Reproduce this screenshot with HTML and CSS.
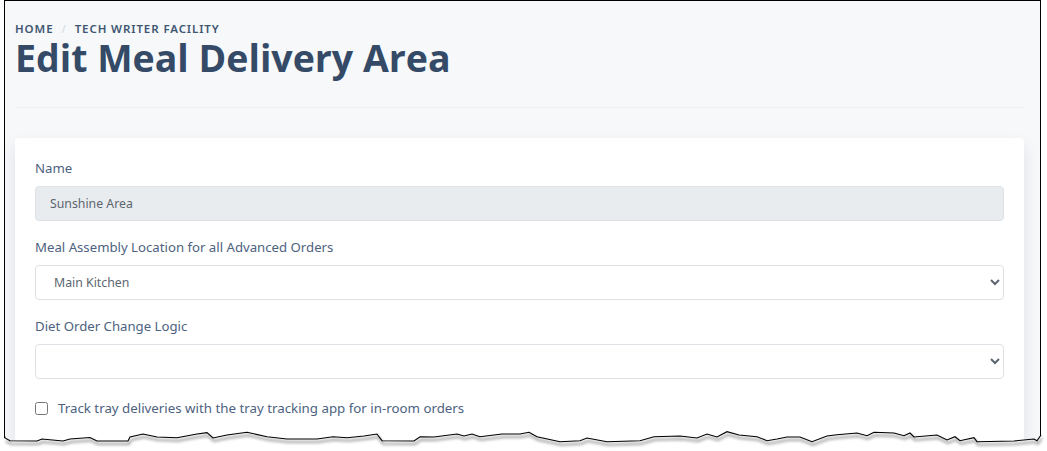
FILE: index.html
```html
<!DOCTYPE html>
<html lang="en">
<head>
    <meta charset="UTF-8">
    <meta name="viewport" content="width=device-width, initial-scale=1.0">
    <title>Edit Meal Delivery Area</title>
    <link rel="stylesheet" href="styles.css">
</head>
<body>
    <div class="frame">
        <div class="page-head">
            <ol class="breadcrumb">
                <li>Home</li>
                <li class="sep">/</li>
                <li>Tech Writer Facility</li>
            </ol>
            <h1>Edit Meal Delivery Area</h1>
        </div>
        <hr class="divider">

        <form class="card">
            <div class="field">
                <label for="name">Name</label>
                <input type="text" id="name" class="input-field" value="Sunshine Area" disabled>
            </div>
            <div class="field">
                <label for="location">Meal Assembly Location for all Advanced Orders</label>
                <select id="location" class="input-field select-field">
                    <option>Main Kitchen</option>
                </select>
            </div>
            <div class="field">
                <label for="logic">Diet Order Change Logic</label>
                <select id="logic" class="input-field select-field">
                    <option></option>
                </select>
            </div>
            <div class="check-row">
                <input type="checkbox" id="tracking">
                <label for="tracking">Track tray deliveries with the tray tracking app for in-room orders</label>
            </div>
        </form>
    </div>

    <!-- Torn bottom edge of the screenshot -->
    <svg class="torn-edge" width="1047" height="451" viewBox="0 0 1047 451">
        <defs>
            <filter id="edgeShadow" x="-2%" y="-50%" width="104%" height="220%">
                <feGaussianBlur stdDeviation="1.6"/>
            </filter>
        </defs>
        <path class="edge-fill" d="M0 451 L0 438 L5 438 L10 440.7 L37 441 L42 439 L63 441 L70 439 L90 437.5 L97 441 L128 441 L130 437 L143 434 L157 437 L177 437.7 L197 434 L207 432.7 L213 438 L227 435 L247 432.3 L267 436.7 L287 439 L317 439 L333 436.7 L347 437.7 L364 436 L377 434 L382 440.7 L414 441 L420 436.7 L434 437 L457 434 L464 436 L472 434 L480 436.7 L502 434 L520 434 L529 432.3 L537 436.7 L560 441.7 L580 440.7 L587 438 L607 441.7 L640 440.7 L654 436.7 L680 436 L697 438 L707 434 L717 437 L727 431.7 L739 435 L757 436.7 L767 440.7 L777 439 L787 437 L800 437 L812 441.7 L827 436 L837 434.7 L857 433 L867 435.7 L874 432.3 L894 433 L904 435.7 L910 433 L914 437 L937 435 L947 440 L955 436.7 L960 440.7 L974 437.7 L977 441.7 L1014 441 L1034 439 L1037 440.7 L1041 435 L1047 435 L1047 451 Z" />
        <path class="edge-shadow" filter="url(#edgeShadow)" transform="translate(1 3)" d="M5 438 L10 440.7 L37 441 L42 439 L63 441 L70 439 L90 437.5 L97 441 L128 441 L130 437 L143 434 L157 437 L177 437.7 L197 434 L207 432.7 L213 438 L227 435 L247 432.3 L267 436.7 L287 439 L317 439 L333 436.7 L347 437.7 L364 436 L377 434 L382 440.7 L414 441 L420 436.7 L434 437 L457 434 L464 436 L472 434 L480 436.7 L502 434 L520 434 L529 432.3 L537 436.7 L560 441.7 L580 440.7 L587 438 L607 441.7 L640 440.7 L654 436.7 L680 436 L697 438 L707 434 L717 437 L727 431.7 L739 435 L757 436.7 L767 440.7 L777 439 L787 437 L800 437 L812 441.7 L827 436 L837 434.7 L857 433 L867 435.7 L874 432.3 L894 433 L904 435.7 L910 433 L914 437 L937 435 L947 440 L955 436.7 L960 440.7 L974 437.7 L977 441.7 L1014 441 L1034 439 L1037 440.7 L1041 435"/>
        <path class="edge-line" d="M4.5 436 L5 438 L10 440.7 L37 441 L42 439 L63 441 L70 439 L90 437.5 L97 441 L128 441 L130 437 L143 434 L157 437 L177 437.7 L197 434 L207 432.7 L213 438 L227 435 L247 432.3 L267 436.7 L287 439 L317 439 L333 436.7 L347 437.7 L364 436 L377 434 L382 440.7 L414 441 L420 436.7 L434 437 L457 434 L464 436 L472 434 L480 436.7 L502 434 L520 434 L529 432.3 L537 436.7 L560 441.7 L580 440.7 L587 438 L607 441.7 L640 440.7 L654 436.7 L680 436 L697 438 L707 434 L717 437 L727 431.7 L739 435 L757 436.7 L767 440.7 L777 439 L787 437 L800 437 L812 441.7 L827 436 L837 434.7 L857 433 L867 435.7 L874 432.3 L894 433 L904 435.7 L910 433 L914 437 L937 435 L947 440 L955 436.7 L960 440.7 L974 437.7 L977 441.7 L1014 441 L1034 439 L1037 440.7 L1041 435"/>
    </svg>
</body>
</html>
```

FILE: styles.css
```css
/* General reset */
* {
    margin: 0;
    padding: 0;
    box-sizing: border-box;
}

body {
    font-family: 'Noto Sans', 'Open Sans', sans-serif;
    background-color: #ffffff;
    color: #4d6280;
    height: 451px;
    overflow: hidden;
    position: relative;
}

.frame {
    margin-left: 4px;
    width: 1037px;
    height: 445px;
    padding: 0 16px 0 10px;
    background-color: #f6f8fa;
    border: 1px solid #000000;
    border-bottom: none;
    overflow: hidden;
}

.page-head {
    padding-top: 20px;
    height: 106px;
}

.breadcrumb {
    list-style: none;
    display: flex;
    gap: 8px;
    font-size: 11.5px;
    line-height: 16px;
    font-weight: 600;
    letter-spacing: 0.9px;
    text-transform: uppercase;
    color: #3f5672;
}

.sep {
    color: #d5dade;
    font-weight: 400;
}

h1 {
    font-family: 'Open Sans', 'Noto Sans', sans-serif;
    font-size: 37.5px;
    line-height: 42px;
    font-weight: 700;
    color: #344a66;
}

.divider {
    border: none;
    border-top: 1px solid #edf0f2;
}

.card {
    margin-top: 30px;
    padding: 20px;
    height: 320px;
    background-color: #ffffff;
    border-radius: 4px;
    box-shadow: 0 8px 16px rgba(30, 40, 60, 0.11);
}

.field {
    margin-bottom: 16px;
}

.field label {
    display: block;
    font-size: 13.2px;
    line-height: 20px;
    margin-bottom: 8px;
}

.input-field {
    display: block;
    width: 100%;
    height: 35px;
    padding: 0 14px;
    font-family: inherit;
    font-size: 12.3px;
    color: #5c6670;
    background-color: #ffffff;
    border: 1px solid #dee2e6;
    border-radius: 4px;
}

.input-field:disabled {
    background-color: #e9ecef;
    color: #5c6670;
    opacity: 1;
}

.select-field {
    padding: 0 14px;
}

.check-row {
    display: flex;
    align-items: center;
    gap: 10px;
    margin-top: 19px;
    font-size: 13.3px;
    line-height: 20px;
}

.check-row input {
    width: 13px;
    height: 13px;
    margin: 0;
}

/* Sits over the page to cut it off */
.torn-edge {
    position: absolute;
    top: 0;
    left: 0;
}

.edge-fill {
    fill: #ffffff;
}

.edge-shadow {
    fill: none;
    stroke: #999999;
    stroke-width: 2;
}

.edge-line {
    fill: none;
    stroke: #000000;
    stroke-width: 1.1;
}
```
